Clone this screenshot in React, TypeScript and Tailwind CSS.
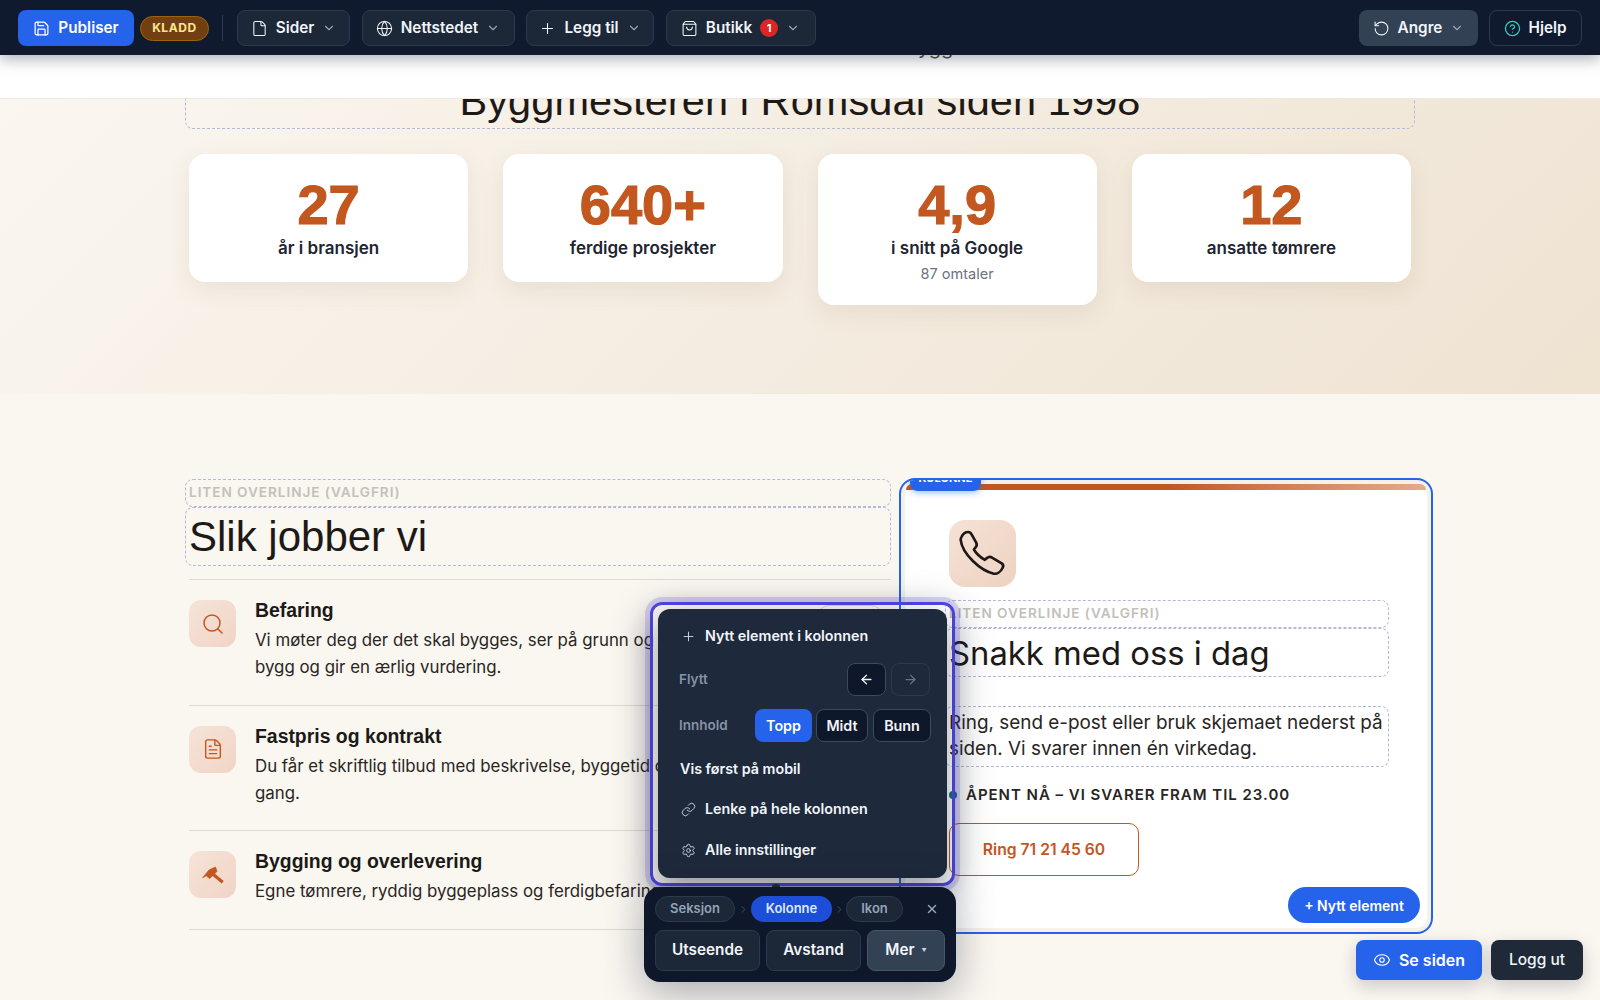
import React from 'react';
import {
  ArrowLeft,
  ArrowRight,
  ChevronDown,
  ChevronRight,
  CircleHelp,
  Eye,
  File,
  FileText,
  Globe,
  Link,
  Plus,
  RotateCcw,
  Save,
  Search,
  Settings,
  ShoppingBag,
  X,
} from 'lucide-react';

const ToolButton = ({ className = '', children }: { className?: string; children: React.ReactNode }) => (
  <button className={`h-9 flex items-center justify-center rounded-lg border border-[#2c3a4f] bg-[#1c2738] text-[15.3px] font-semibold text-[#f1f5f9] ${className}`}>
    {children}
  </button>
);

const stats = [
  { value: '27', label: 'år i bransjen' },
  { value: '640+', label: 'ferdige prosjekter' },
  { value: '4,9', label: 'i snitt på Google', sub: '87 omtaler' },
  { value: '12', label: 'ansatte tømrere' },
];

const Hammer = () => (
  <svg width="26" height="20" viewBox="45 55 72 54" fill="none">
    <path d="M52 90 L70 68 L88 60 L92 72 L72 92 L62 84 Z" fill="#c2571f" stroke="#c2571f" strokeWidth="2" strokeLinejoin="round" />
    <path d="M76 76 L108 102" stroke="#c2571f" strokeWidth="9" />
  </svg>
);

const Handset = () => (
  <svg width="47" height="47" viewBox="40 42 142 142" fill="none" stroke="#1c1917" strokeWidth="8" strokeLinejoin="round">
    <path d="M48 62 C52 54 60 48 68 48 C73 48 76 51 78 55 L92 80 C95 86 94 91 89 96 L85 101 C92 113 105 125 118 132 L124 127 C129 123 135 122 141 126 L169 143 C173 146 175 151 172 156 C166 168 155 176 145 174 C105 165 50 115 45 72 C45 68 46 65 48 62 Z" />
  </svg>
);

const steps = [
  {
    icon: <Search size={24} strokeWidth={1.5} color="#c2571f" />,
    title: 'Befaring',
    text: <>Vi møter deg der det skal bygges, ser på grunn og<br />bygg og gir en ærlig vurdering.</>,
  },
  {
    icon: <FileText size={22} strokeWidth={1.5} color="#c2571f" />,
    title: 'Fastpris og kontrakt',
    text: <>Du får et skriftlig tilbud med beskrivelse, byggetid og<br />gang.</>,
  },
  {
    icon: <Hammer />,
    title: 'Bygging og overlevering',
    text: <>Egne tømrere, ryddig byggeplass og ferdigbefaring</>,
  },
];

const Overline = ({ className = '' }: { className?: string }) => (
  <div className={`h-[28px] rounded-lg border border-dashed border-[#b4b9da] px-[3px] text-[13.6px] font-semibold leading-[25px] tracking-[0.07em] text-[#c4c0b9] ${className}`}>
    LITEN OVERLINJE (VALGFRI)
  </div>
);

export default function App() {
  return (
    <div className="relative flex h-[1000px] w-[1600px] flex-col overflow-hidden bg-[#faf6f0] font-['Inter',sans-serif] text-[#1c1917]">
      {/* Toolbar */}
      <header className="relative z-20 flex h-[55px] shrink-0 items-center justify-between bg-[#0f1a2e] px-[18px] pt-px shadow-[0_4px_14px_rgba(15,23,42,0.35)]">
        <div className="flex items-center">
          <button className="flex h-9 w-[116px] items-center justify-center gap-2 rounded-lg bg-[#2563eb] text-[15.3px] font-semibold text-white">
            <Save size={17} strokeWidth={1.75} /> Publiser
          </button>
          <span className="ml-[6px] flex h-[25px] w-[69px] items-center justify-center rounded-full border border-[#a16207] bg-[#713f12] text-[12px] font-bold tracking-[0.05em] text-[#fde68a]">
            KLADD
          </span>
          <div className="ml-[13px] mr-[14px] h-[26px] w-px bg-[#2c3a4f]" />
          <div className="flex gap-[11.5px]">
            <ToolButton className="w-[113px] gap-2">
              <File size={17} strokeWidth={1.5} /> Sider <ChevronDown size={14} className="text-[#94a3b8]" />
            </ToolButton>
            <ToolButton className="w-[153px] gap-2">
              <Globe size={17} strokeWidth={1.5} /> Nettstedet <ChevronDown size={14} className="text-[#94a3b8]" />
            </ToolButton>
            <ToolButton className="w-[128px] gap-2">
              <Plus size={17} strokeWidth={1.5} /> Legg til <ChevronDown size={14} className="text-[#94a3b8]" />
            </ToolButton>
            <ToolButton className="w-[150px] gap-2">
              <ShoppingBag size={17} strokeWidth={1.5} /> Butikk
              <span className="flex h-[18px] w-[18px] items-center justify-center rounded-full bg-[#dc2626] text-[11px] font-bold text-white">1</span>
              <ChevronDown size={14} className="text-[#94a3b8]" />
            </ToolButton>
          </div>
        </div>
        <div className="flex gap-[11px]">
          <button className="flex h-9 w-[119px] items-center justify-center gap-2 rounded-lg bg-[#334155] text-[15.3px] font-semibold text-[#f1f5f9]">
            <RotateCcw size={17} strokeWidth={1.5} /> Angre <ChevronDown size={14} className="text-[#94a3b8]" />
          </button>
          <button className="flex h-9 w-[93px] items-center justify-center gap-[7px] rounded-lg border border-[#2c3a4f] text-[15.3px] font-semibold text-[#f1f5f9]">
            <CircleHelp size={17} strokeWidth={1.75} color="#2dd4bf" /> Hjelp
          </button>
        </div>
      </header>

      {/* White strip, the page is scrolled so the intro text is almost gone */}
      <div className="h-[44px] shrink-0 overflow-hidden border-b border-[#efe9e0] bg-white">
        <p className="mt-[-20px] pl-[918px] text-[20px] leading-[24px] text-[#57534e]">ygg</p>
      </div>

      {/* Hero stats */}
      <section className="h-[295px] shrink-0 overflow-hidden bg-[linear-gradient(135deg,#faf6f0,#efe3d2)] px-[185px]">
        <div className="mt-[-30px] flex h-[60px] items-center justify-center rounded-lg border border-dashed border-[#b4b9da]">
          <h1 className="mt-[3px] font-['Liberation_Sans',sans-serif] text-[41.5px] leading-[50px] tracking-[0.002em] text-[#1c1917]">Byggmesteren i Romsdal siden 1998</h1>
        </div>
        <div className="mt-[25px] grid grid-cols-4 items-start gap-[35px] px-[4px]">
          {stats.map((s) => (
            <div key={s.value} className="flex flex-col items-center rounded-2xl bg-white pb-[21px] pt-[23px] shadow-[0_8px_24px_rgba(120,90,50,0.1)]">
              <div className="font-['Liberation_Sans',sans-serif] text-[56px] font-bold leading-[56px] text-[#c2571f] [-webkit-text-stroke:1.2px_#c2571f]">{s.value}</div>
              <div className="mt-[3px] text-[17px] font-semibold leading-[25px] text-[#1e2430]">{s.label}</div>
              {s.sub && <div className="mt-[2px] text-[14.5px] leading-[21px] text-[#6b7280]">{s.sub}</div>}
            </div>
          ))}
        </div>
      </section>

      {/* How we work */}
      <main className="flex flex-1 items-start gap-[8px] pl-[185px] pt-[84px]">
        <div className="w-[706px] pt-[1px]">
          <Overline />
          <div className="flex h-[59px] items-center rounded-lg border border-dashed border-[#b4b9da] px-[3px]">
            <h2 className="font-['Liberation_Sans',sans-serif] text-[42px] leading-[50px] text-[#1c1917]">Slik jobber vi</h2>
          </div>
          <div className="mt-[13px] pl-[4px]">
            <div className="border-t border-[#dedad3]">
              {steps.map((step) => (
                <div key={step.title} className="flex gap-[19px] border-b border-[#dedad3] pb-[23.5px] pt-[19px]">
                  <div className="mt-[1px] flex h-[47px] w-[47px] shrink-0 items-center justify-center rounded-xl bg-gradient-to-br from-[#f6e3d8] to-[#f0d5c6]">
                    {step.icon}
                  </div>
                  <div>
                    <h3 className="mt-[-1px] font-['Liberation_Sans',sans-serif] text-[19.4px] font-bold leading-[24px] text-[#1c1917]">{step.title}</h3>
                    <p className="mt-[5px] text-[16.85px] leading-[27px] text-[#29251f]">{step.text}</p>
                  </div>
                </div>
              ))}
            </div>
          </div>
        </div>

        {/* Selected column */}
        <div className="relative h-[456px] w-[534px] overflow-hidden rounded-2xl border-2 border-[#2563eb] bg-white shadow-[inset_0_0_0_4px_#f5f2ee]">
          <div className="mx-[5px] mt-[4px] h-[6px] rounded-t-xl bg-gradient-to-r from-[#c2571f] via-[#c2571f] to-[#e4ab8c]" />
          <span className="absolute left-[9px] top-[-12px] flex h-[23px] w-[71px] items-end justify-center rounded-b-lg bg-[#2563eb] pb-[7px] text-[11px] font-bold leading-none text-white shadow-[0_2px_6px_rgba(37,99,235,0.4)]">
            KOLONNE
          </span>
          <div className="pl-[44px] pr-[42px]">
            <div className="ml-[4px] mt-[30px] flex h-[67px] w-[67px] items-center justify-center rounded-2xl bg-gradient-to-br from-[#f5e2d6] to-[#eed2c1]">
              <Handset />
            </div>
            <Overline className="mt-[13px]" />
            <div className="flex h-[49px] items-center rounded-lg border border-dashed border-[#b4b9da] px-[3px]">
              <h2 className="text-[32.8px] leading-[44px] text-[#1c1917]">Snakk med oss i dag</h2>
            </div>
            <div className="mt-[29px] h-[61px] rounded-lg border border-dashed border-[#b4b9da] px-[3px] pt-[3px] text-[18.9px] leading-[26px] text-[#29251f]">
              Ring, send e-post eller bruk skjemaet nederst på siden. Vi svarer innen én virkedag.
            </div>
            <div className="ml-[4px] mt-[18px] flex h-[20px] items-center gap-[9px]">
              <span className="h-2 w-2 rounded-full bg-[#0f766e]" />
              <span className="text-[15px] font-semibold tracking-[0.065em] text-[#29251f]">ÅPENT NÅ – VI SVARER FRAM TIL 23.00</span>
            </div>
            <button className="ml-[4px] mt-[18px] h-[53px] w-[190px] rounded-[10px] border border-[#c2571f] text-[15.7px] font-semibold text-[#c2571f]">
              Ring 71 21 45 60
            </button>
          </div>
          <button className="absolute bottom-[9px] right-[11px] flex h-[36px] w-[132px] items-center justify-center gap-1 rounded-full bg-[#2563eb] text-[14px] font-semibold text-white">
            + Nytt element
          </button>
        </div>
      </main>

      {/* Button of the row behind the menu, only its top shows */}
      <div className="absolute left-[817px] top-[605px] h-[40px] w-[66px] rounded-xl border border-[#d6d1c9]" />

      {/* Selection outline + column menu */}
      <div className="absolute left-[650px] top-[602px] z-10 h-[284px] w-[305px] rounded-xl border-[3px] border-[#4f46e5] shadow-[0_0_0_5px_rgba(79,70,229,0.2),0_10px_40px_rgba(15,23,42,0.3)]" />
      <div className="absolute left-[658px] top-[609px] z-10 flex h-[269px] w-[289px] flex-col rounded-xl bg-[#1e293b] text-[14.3px] font-semibold text-[#f1f5f9] shadow-[0_10px_30px_rgba(15,23,42,0.4)]">
        <div className="mt-[16px] flex h-[22px] items-center pl-[23px]">
          <Plus size={15} strokeWidth={1.5} className="text-[#cbd5e1]" />
          <span className="ml-[9px]">Nytt element i kolonnen</span>
        </div>
        <div className="mt-[16px] flex h-[33px] items-center pl-[21px] pr-[17px]">
          <span className="flex-1 text-[13.5px] text-[#8593a8]">Flytt</span>
          <button className="flex h-[33px] w-[39px] items-center justify-center rounded-lg border border-[#3a4a61] bg-[#0f172a]">
            <ArrowLeft size={15} strokeWidth={2.25} />
          </button>
          <button className="ml-[5px] flex h-[33px] w-[39px] items-center justify-center rounded-lg border border-[#2c3a4f] text-[#64748b]">
            <ArrowRight size={15} />
          </button>
        </div>
        <div className="mt-[13px] flex h-[33px] items-center pl-[21px] pr-[16px]">
          <span className="flex-1 text-[13.5px] text-[#8593a8]">Innhold</span>
          <button className="h-[33px] w-[57px] rounded-lg bg-[#2563eb] text-white">Topp</button>
          <button className="ml-[4px] h-[33px] w-[52px] rounded-lg border border-[#3a4a61] bg-[#0f172a]">Midt</button>
          <button className="ml-[5px] h-[33px] w-[58px] rounded-lg border border-[#3a4a61] bg-[#0f172a]">Bunn</button>
        </div>
        <div className="mt-[17px] flex h-[20px] items-center pl-[22px]">Vis først på mobil</div>
        <div className="mt-[20px] flex h-[20px] items-center pl-[23px]">
          <Link size={15} strokeWidth={1.5} className="text-[#cbd5e1]" />
          <span className="ml-[9px]">Lenke på hele kolonnen</span>
        </div>
        <div className="mt-[21px] flex h-[20px] items-center pl-[23px]">
          <Settings size={15} strokeWidth={1.5} className="text-[#cbd5e1]" />
          <span className="ml-[9px]">Alle innstillinger</span>
        </div>
      </div>
      <div className="absolute left-[772px] top-[884px] z-10 h-[3px] w-[8px] rounded-t-sm bg-[#1e293b]" />

      {/* Selection bar */}
      <div className="absolute left-[644px] top-[887px] z-10 h-[95px] w-[312px] rounded-2xl bg-[#0f172a] px-[11px] pt-[9px] shadow-[0_10px_40px_rgba(15,23,42,0.35)]">
        <div className="flex h-[26px] items-center text-[13px] font-semibold">
          <span className="flex h-[26px] w-[80px] items-center justify-center rounded-full border border-[#2c3a4f] bg-[#1c2738] text-[#94a3b8]">Seksjon</span>
          <ChevronRight size={11} className="mx-[2.5px] text-[#475569]" />
          <span className="flex h-[26px] w-[81px] items-center justify-center rounded-full bg-[#1d4ed8] text-[#dbeafe]">Kolonne</span>
          <ChevronRight size={11} className="mx-[1.5px] text-[#475569]" />
          <span className="flex h-[26px] w-[57px] items-center justify-center rounded-full border border-[#2c3a4f] bg-[#1c2738] text-[#94a3b8]">Ikon</span>
          <X size={14} strokeWidth={2.5} className="ml-[22px] text-[#94a3b8]" />
        </div>
        <div className="mt-[8px] flex gap-[6px]">
          <ToolButton className="!h-[41px] w-[105px]">Utseende</ToolButton>
          <ToolButton className="!h-[41px] w-[95px]">Avstand</ToolButton>
          <button className="flex h-[41px] w-[78px] items-center justify-center gap-[7px] rounded-lg border border-[#475569] bg-[#334155] text-[15.3px] font-semibold text-[#f1f5f9]">
            Mer <span className="text-[5px] text-[#cbd5e1]">▼</span>
          </button>
        </div>
      </div>

      {/* Bottom right actions */}
      <div className="absolute bottom-[20px] right-[17px] z-10 flex gap-[9px]">
        <button className="flex h-10 w-[126px] items-center justify-center gap-2 rounded-lg bg-[#2563eb] text-[16px] font-semibold text-white shadow-[0_6px_18px_rgba(15,23,42,0.2)]">
          <Eye size={18} strokeWidth={1.5} /> Se siden
        </button>
        <button className="h-10 w-[92px] rounded-lg bg-[#1f2937] text-[15.5px] font-medium text-[#f1f5f9] shadow-[0_6px_18px_rgba(15,23,42,0.2)]">
          Logg ut
        </button>
      </div>
    </div>
  );
}
